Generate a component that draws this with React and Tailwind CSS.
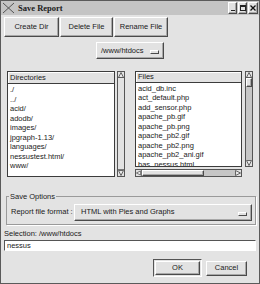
import React from "react";

const dirs = ["./", "../", "acid/", "adodb/", "images/", "jpgraph-1.13/", "languages/", "nessustest.html/", "www/"];
const files = ["acid_db.inc", "act_default.php", "add_sensor.php", "apache_pb.gif", "apache_pb.png", "apache_pb2.gif", "apache_pb2.png", "apache_pb2_ani.gif", "bas_nessus.html"];

const raised = "border border-t-white border-l-white border-r-[#4a4a4a] border-b-[#4a4a4a] shadow-[inset_-1px_-1px_0_#a8a8a8]";

function Btn({ children, className }) {
  return (
    <div className={`flex items-center justify-center bg-[#e2e2e2] ${raised} ${className}`}>{children}</div>
  );
}

function Indicator() {
  return <div className="w-[9px] h-[4px] border border-t-white border-l-white border-r-[#4a4a4a] border-b-[#4a4a4a]" />;
}

function Arrow({ dir }) {
  const pts = {
    up: "3,0.5 5.5,5.5 0.5,5.5",
    down: "0.5,0.5 5.5,0.5 3,5.5",
    left: "0.5,3 5.5,0.5 5.5,5.5",
    right: "5.5,3 0.5,0.5 0.5,5.5",
  }[dir];
  return (
    <svg width="6" height="6" viewBox="0 0 6 6" className="block">
      <polygon points={pts} fill="#e8e8e8" stroke="#444" strokeWidth="0.8" />
    </svg>
  );
}

function VScroll({ thumbFull }) {
  return (
    <div className="w-[8px] h-full flex flex-col border border-[#555] bg-[#c6c6c6]">
      <div className="h-[6px] flex items-center justify-center bg-[#e2e2e2] border-b border-[#777]"><Arrow dir="up" /></div>
      {thumbFull ? (
        <div className="flex-1 bg-[#e2e2e2] border-b border-[#777]" />
      ) : (
        <>
          <div className={`h-[9px] bg-[#e2e2e2] ${raised}`} />
          <div className="flex-1" />
        </>
      )}
      <div className="h-[6px] flex items-center justify-center bg-[#e2e2e2]"><Arrow dir="down" /></div>
    </div>
  );
}

function ListBox({ title, items, className }) {
  return (
    <div className={`flex flex-col border border-[#3c3c3c] bg-white overflow-hidden ${className}`}>
      <div className="h-[12px] flex items-center pl-[2px] bg-[#e2e2e2] border-b border-[#3c3c3c] shadow-[inset_1px_1px_0_white]">{title}</div>
      <div className="flex flex-col pt-[1px] pl-[2px]">
        {items.map((t) => (
          <div key={t} className="h-[9.5px] leading-[9.5px] whitespace-nowrap">{t}</div>
        ))}
      </div>
    </div>
  );
}

export default function App() {
  return (
    <div className="w-[260px] h-[284px] bg-[#e3e3e3] border border-[#5a5a5a] flex flex-col font-['Liberation_Sans',sans-serif] text-[7.5px] leading-[9.5px] text-[#1a1a1a] overflow-hidden">
      {/* Title bar */}
      <div className="h-[14px] bg-[#c4c4c4] flex items-center">
        <svg width="13" height="12" viewBox="0 0 13 12" className="ml-[1px] shrink-0">
          <path d="M1 1 L12 11 M12 1 L1 11" stroke="#555" strokeWidth="1" fill="none" />
        </svg>
        <span className="ml-[3px] font-['Liberation_Serif',serif] font-bold text-[8.5px] leading-[10px]">Save Report</span>
        <div className="ml-auto mr-[1px] flex gap-[1px]">
          <div className={`w-[9px] h-[12px] bg-[#e2e2e2] ${raised} flex items-end justify-center pb-[2px]`}>
            <div className="w-[4px] h-[1.5px] bg-[#222]" />
          </div>
          <div className={`w-[9px] h-[12px] bg-[#e2e2e2] ${raised} flex items-center justify-center`}>
            <div className="w-[6px] h-[6px] border border-[#222] border-t-2" />
          </div>
          <div className={`w-[10px] h-[12px] bg-[#e2e2e2] ${raised} flex items-center justify-center`}>
            <svg width="6" height="6" viewBox="0 0 6 6"><path d="M0.5 0.5 L5.5 5.5 M5.5 0.5 L0.5 5.5" stroke="#111" strokeWidth="1.3" /></svg>
          </div>
        </div>
      </div>

      {/* Button row */}
      <div className="mt-[2px] ml-[3px] flex gap-[1px]">
        <Btn className="w-[55px] h-[20px]">Create Dir</Btn>
        <Btn className="w-[53px] h-[20px]">Delete File</Btn>
        <Btn className="w-[54px] h-[20px]">Rename File</Btn>
      </div>

      {/* Directory dropdown */}
      <div className="mt-[5px] flex justify-center">
        <div className={`w-[68px] h-[17px] bg-[#e2e2e2] ${raised} flex items-center pl-[4px] pr-[4px]`}>
          <span>/www/htdocs</span>
          <div className="ml-auto mt-[3px]"><Indicator /></div>
        </div>
      </div>

      {/* Lists */}
      <div className="mt-[12px] ml-[6px] h-[106px] flex">
        <ListBox title="Directories" items={dirs} className="w-[108px] h-full" />
        <div className="ml-[2px] h-full"><VScroll thumbFull /></div>
        <div className="ml-[10px] flex flex-col gap-[2px]">
          <div className="flex">
            <ListBox title="Files" items={files} className="w-[107px] h-[96px]" />
            <div className="ml-[3px] h-[96px]"><VScroll /></div>
          </div>
          <div className="w-[107px] h-[8px] flex border border-[#555] bg-[#c6c6c6]">
            <div className="w-[6px] flex items-center justify-center bg-[#e2e2e2] border-r border-[#777]"><Arrow dir="left" /></div>
            <div className={`w-[62px] bg-[#e2e2e2] ${raised}`} />
            <div className="flex-1" />
            <div className="w-[6px] flex items-center justify-center bg-[#e2e2e2]"><Arrow dir="right" /></div>
          </div>
        </div>
      </div>

      {/* Save options */}
      <fieldset className="mt-[15px] ml-[5px] mr-[3px] border border-[#9a9a9a] shadow-[1px_1px_0_white] pl-[4px] pr-[3px] pb-[3px]">
        <legend className="-ml-[2px] px-[1px] leading-[9.5px]">Save Options</legend>
        <div className="mt-[2px] flex items-center">
          <span className="w-[63px] whitespace-nowrap">Report file format :</span>
          <div className={`flex-1 h-[17px] bg-[#e2e2e2] ${raised} flex items-center pl-[6px] pr-[4px]`}>
            <span>HTML with Pies and Graphs</span>
            <div className="ml-auto mt-[3px]"><Indicator /></div>
          </div>
        </div>
      </fieldset>

      {/* Selection */}
      <div className="mt-[4px] ml-[3px]">Selection: /www/htdocs</div>
      <div className="mt-[2px] mx-[3px] h-[11px] bg-white border border-t-[#555] border-l-[#555] border-b-white border-r-white flex items-center pl-[2px]">
        nessus
      </div>

      {/* OK / Cancel */}
      <div className="mt-[8px] flex items-center justify-end pr-[12px] gap-[4px]">
        <div className="w-[49px] h-[18px] border border-t-[#555] border-l-[#555] border-b-white border-r-white p-[1px] flex">
          <Btn className="flex-1">OK</Btn>
        </div>
        <Btn className="w-[41px] h-[15px]">Cancel</Btn>
      </div>
    </div>
  );
}
